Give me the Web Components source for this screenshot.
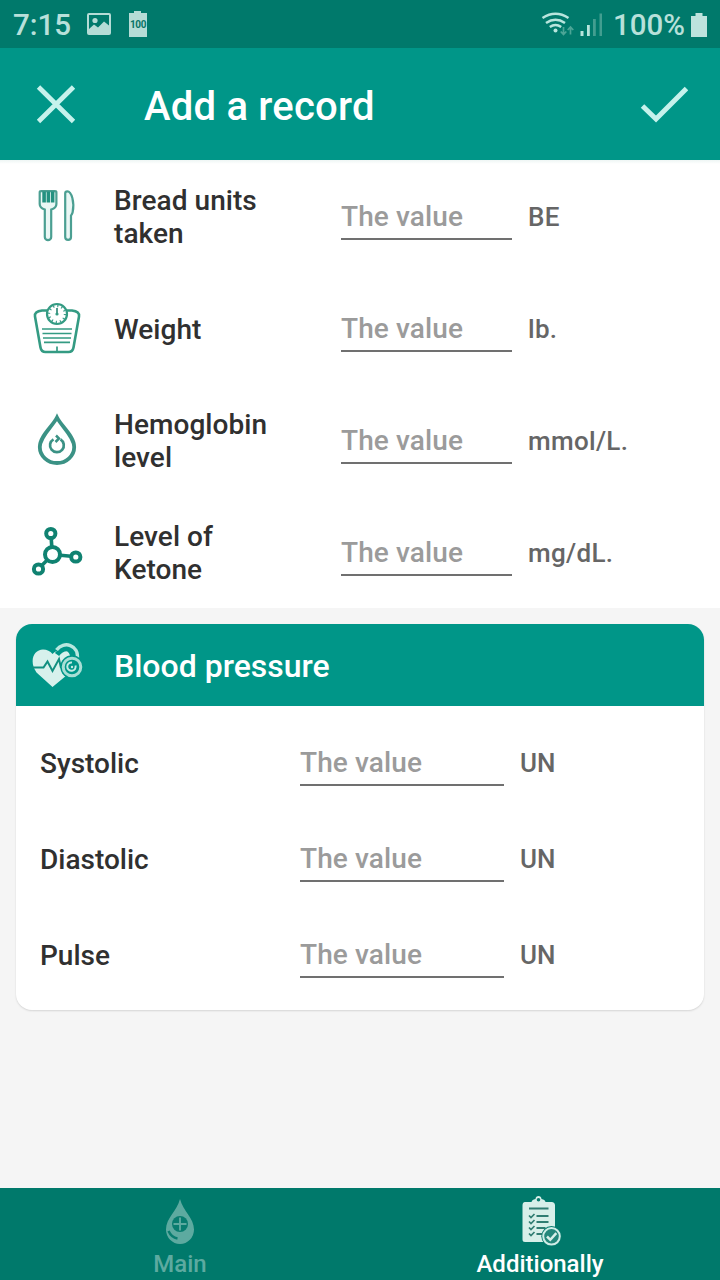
<!DOCTYPE html>
<html lang="en">
<head>
<meta charset="utf-8">
<title>Add a record</title>
<style>
body{margin:0;background:#f5f5f5;font-family:Roboto,"Liberation Sans",sans-serif}
</style>
</head>
<body>
<record-screen></record-screen>
<script>
const ICONS = {
  picture: ['86 12 26 26', '<path fill="#b5dcd6" fill-rule="evenodd" d="M89 13h20q2 0 2 2v18q0 2-2 2H89q-2 0-2-2V15q0-2 2-2zm0 2v14l5-4.500 4 3 6-6 5 4V15z"/><circle cx="95" cy="20.500" r="2.600" fill="#b5dcd6"/>'],
  battery: ['688 10 22 28', '<path fill="#bde3dd" d="M691 15h4.500v-3h7v3h4.500v21h-16z"/>'],
  wifi: ['540 8 36 30', '<g fill="none" stroke="#b8e5dd" stroke-width="2.500"><path d="M542.500 17q13-8.500 26 0M546 22q9.500-6.500 19 0M549.800 26q5.700-4 11.400 0"/></g><circle cx="555.500" cy="29.600" r="2" fill="#b8e5dd"/><path d="M563.500 26v7m-2.800-2.500 2.800 3 2.800-3M570.500 33.500v-7m-2.800 2.500 2.800-3 2.800 3" fill="none" stroke="#4ca596" stroke-width="1.700"/>'],
  signal: ['578 10 28 28', '<path fill="#b8e5dd" d="M580.500 31h3v5h-3zM587 25h2.800v11H587z"/><path fill="#429e90" d="M593 19h2.800v17H593zM599.500 13.500h2.500V36h-2.500z"/>'],
  close: ['32 80 48 48', '<path d="M38.500 87 73.500 121.500M73.500 87 38.500 121.500" fill="none" stroke="#c6f2ec" stroke-width="4.800"/>'],
  check: ['640 80 48 48', '<path d="m642.500 106 13.500 13 30.500-30.500" fill="none" stroke="#c6f2ec" stroke-width="5"/>'],
  cutlery: ['32 187 50 58', '<g fill="#eaf7f5" stroke="#4b9f92" stroke-width="2.200"><path d="M39.700 192.500q0-1.300 1.500-1.300h13.700q1.500 0 1.500 1.300V204q0 4-5.200 5.500v27.500a3.200 3.200 0 0 1-6.400 0V209.500q-5.100-1.500-5.100-5.500z"/><path d="M65.200 193.500q0-2.200 2.200-2.200c4 0 7.500 11 5.200 21.200q-1 2.500-1.600 3v21.500a2.900 2.900 0 0 1-5.800 0z"/></g><path fill="#239180" d="M42.300 191.500h3.600v11h-3.600zM46.600 191.500h3.600v11h-3.600zM51 191.500h3.400v11h-3.400z"/>'],
  scale: ['32 299 50 58', '<path d="M48 310.500H42q-8 1-7 6l5.500 31q.8 4.500 5 4.500h23q4.200 0 5-4.500l5.500-31q1-5-7-6h-6" fill="none" stroke="#349b83" stroke-width="2.600"/><circle cx="57" cy="314" r="10" fill="#fff" stroke="#349b83" stroke-width="2.200"/><circle cx="57" cy="314" r="8" fill="none" stroke="#3d9e8a" stroke-width="2.400" stroke-dasharray="1.200 2.989"/><path d="M57 308v5.500" stroke="#187866" stroke-width="1.500"/><circle cx="57" cy="314" r="1.600" fill="#349b83"/><path d="M42 329h30M42.500 333.500h29M43 338h28M44 342.300h26M57 346.500v4.500" stroke="#349b83" stroke-width="1.700"/>'],
  drop: ['32 410 50 60', '<g fill="none" stroke="#3b9285"><path d="M57 417.500c-4.500 9-17.200 18.500-17.200 29.500a17.200 16 0 0 0 34.400 0c0-11-12.700-20.500-17.200-29.500z" stroke-width="3.800"/><path d="M53.500 439.300a6.900 6.900 0 1 0 7 .1" stroke-width="2.700"/><path d="m56 435.500 3 3-3.500 3.500" stroke-width="2.500"/></g>'],
  molecule: ['30 525 54 54', '<g fill="none" stroke="#108271" stroke-width="4"><circle cx="52.500" cy="554.500" r="7.500"/><circle cx="50.800" cy="533.500" r="4.600"/><circle cx="75.800" cy="557" r="4.600"/><circle cx="38.500" cy="569" r="4.600"/><path stroke-width="3.600" d="M51.200 538.500l.6 8M60.500 555.300l10.500 1M47 560.200l-5 5"/></g>'],
  heart: ['30 639 54 50', '<path fill="#d7f1ec" d="M52.500 687 36.500 672.500C28.500 661 34 649.500 43 649.500q6 0 9.500 4.500 5-5.500 14-3.500 6 5 4 16L67 675z"/><path d="M57 654.500c6-9 21.500-7.500 20.500 5" fill="none" stroke="#009688" stroke-width="5"/><path d="M56.500 650c7-9.500 23-5.500 20.700 9.500" fill="none" stroke="#b8e7df" stroke-width="3.500"/><path d="M32 667.500h11.500l4-6 5 9.500 6.500-12 2 9" fill="none" stroke="#128f80" stroke-width="2"/><circle cx="72" cy="667" r="11.700" fill="#009688"/><circle cx="72" cy="667" r="8.800" fill="none" stroke="#a8ded5" stroke-width="3"/><path d="M75.500 665.500a4.200 4.200 0 1 1-3.500-3" fill="none" stroke="#c4ebe5" stroke-width="2"/><circle cx="72" cy="667" r="1.200" fill="#c4ebe5"/>'],
  main: ['160 1196 40 50', '<path fill="#5daaa0" d="M180 1199c-3 12-14 19-14 30.500a14 14.500 0 0 0 28 0c0-11.500-11-18.500-14-30.500z"/><circle cx="180" cy="1224" r="8" fill="#087c6f"/><path d="M173.500 1224h13M180 1217.500v13" stroke="#5daaa0" stroke-width="1.900"/><path d="M168.500 1231q3 6.500 9 7.500" fill="none" stroke="#087c6f" stroke-width="2.500"/>'],
  clipboard: ['517 1194 46 54', '<path fill="#d8efe9" d="M525 1202h6.500q.5-2.500 4-3c0-4 6-4 6 0q3.500.5 4 3h6q3.500 0 3.500 3.500V1242H525q-2.500 0-2.500-2.500v-34q0-3.500 2.500-3.500z"/><circle cx="538.500" cy="1199.800" r="1.800" fill="#087c6f"/><path d="M529 1208.500h19.500M536.500 1216h12M536.500 1222h12M536.500 1228h9M536.500 1234h6" stroke="#317d72" stroke-width="2"/><path d="m529 1215.500 2 2 3.500-3.500m-5.500 7.500 2 2 3.500-3.500m-5.500 7.500 2 2 3.500-3.500m-5.500 7.500 2 2 3.500-3.500" fill="none" stroke="#317d72" stroke-width="1.700"/><circle cx="551.500" cy="1236.300" r="10.200" fill="#087c6f"/><circle cx="551.500" cy="1236.300" r="8.300" fill="#24877b" stroke="#d0ede7" stroke-width="2"/><path d="m547 1236.500 3.300 3.300 6-6.600" fill="none" stroke="#d8efe9" stroke-width="2.500"/>']
};

function define(name, markup, setup) {
  customElements.define(name, class extends HTMLElement {
    connectedCallback() {
      if (this.shadowRoot) return;
      const template = document.createElement('template');
      template.innerHTML = markup;
      const root = this.attachShadow({mode: 'open'});
      const content = template.content.cloneNode(true);
      if (setup) setup(this, content);
      root.append(content);
    }
  });
}

define('app-icon', `<style>:host{display:block;flex:none}svg{display:block}</style><span></span>`, (el, root) => {
  const [box, art] = ICONS[el.getAttribute('name')];
  const [, , w, h] = box.split(' ');
  root.querySelector('span').innerHTML = `<svg width="${w}" height="${h}" viewBox="${box}" aria-hidden="true">${art}</svg>`;
});

define('charge-badge', `<style>
:host{display:flex;flex:none;width:18px;height:26px;box-sizing:border-box;padding-top:6px;justify-content:center;background:#b5dcd6;
clip-path:polygon(0 2px,5px 2px,5px 0,12px 0,12px 2px,18px 2px,18px 26px,0 26px);font-size:10px;line-height:16px;letter-spacing:-.4px;font-weight:700;color:#087566}
</style><slot></slot>`);

define('status-bar', `<style>
:host{display:flex;box-sizing:border-box;height:48px;background:#00796b;align-items:center;color:#b8e0da;font-size:29.500px;font-weight:500;line-height:48px;padding:0 10px 0 13px}
.time{width:73px;padding-top:2px}
charge-badge{margin-left:17px}
.gap{flex:1}
app-icon[name=picture]{margin-top:2px}
app-icon[name=battery]{margin-top:1px}
app-icon[name=signal]{margin:0 7px 0 2px}
.pct{width:75px;white-space:nowrap;padding-top:2px}
</style><span class="time">7:15</span><app-icon name="picture"></app-icon><charge-badge>100</charge-badge><span class="gap"></span>
<app-icon name="wifi"></app-icon><app-icon name="signal"></app-icon><span class="pct">100%</span><app-icon name="battery"></app-icon>`);

define('top-bar', `<style>
:host{display:flex;box-sizing:border-box;height:112px;padding:0 32px;align-items:center;background:#009688;color:#fff}
h1{flex:1;margin:5px 0 0 64px;font-size:40px;line-height:48px;font-weight:500;letter-spacing:.22px}
</style><app-icon name="close"></app-icon><h1><slot></slot></h1><app-icon name="check"></app-icon>`);

define('value-field', `<style>
:host{display:block;box-sizing:border-box;height:48px;padding-top:1px;border-bottom:2px solid #707070;color:#9b9b9b;font-size:28px;line-height:48px;font-weight:500;letter-spacing:.12px;white-space:nowrap}
</style><slot>The value</slot>`);

define('record-row', `<style>
:host{display:grid;grid-template-columns:50px 259px 171px 1fr;box-sizing:border-box;height:112px;padding:0 32px;align-items:center}
app-icon{justify-self:center}
.label{margin-left:32px;font-size:28px;line-height:33px;font-weight:500;letter-spacing:.06px;color:#303030;margin-top:2px}
.unit{padding-left:16px;font-size:26px;line-height:34px;color:#666;font-weight:500;letter-spacing:.3px;white-space:nowrap;margin-top:2px}
</style><span class="label"><slot></slot></span><value-field></value-field><span class="unit"></span>`, (el, root) => {
  const icon = document.createElement('app-icon');
  icon.setAttribute('name', el.getAttribute('icon'));
  root.querySelector('.label').before(icon);
  root.querySelector('.unit').textContent = el.getAttribute('unit');
});

define('pressure-row', `<style>
:host{display:grid;grid-template-columns:260px 204px 1fr;height:96px;padding:0 24px;align-items:center}
.label{font-size:28px;line-height:34px;font-weight:500;color:#303030;margin-top:3px}
.unit{padding-left:16px;font-size:26px;line-height:34px;color:#666;font-weight:500;margin-top:2px}
</style><span class="label"><slot></slot></span><value-field></value-field><span class="unit">UN</span>`);

define('pressure-card', `<style>
:host{display:block;box-sizing:border-box;height:386px;margin:16px;background:#fff;border-radius:16px;overflow:hidden;box-shadow:0 1px 2px #0002}
header{display:flex;height:82px;padding-left:14px;align-items:center;gap:30px;background:#009688;color:#fff}
app-icon{margin-top:-2px}
h2{margin:2px 0 0;font-size:32px;line-height:38px;font-weight:500}
main{padding:8px 0}
</style><header><app-icon name="heart"></app-icon><h2>Blood pressure</h2></header><main><slot></slot></main>`);

define('nav-tab', `<style>
:host{display:flex;flex:1;flex-direction:column;align-items:center;color:#5daaa0;font-size:24px;line-height:28px;font-weight:500}
:host([active]){color:#fff}
.art{height:54px;padding-top:6px;box-sizing:border-box;margin-bottom:8px}
:host(:not([active])) .art{padding-top:8px}
</style><div class="art"><slot name="icon"></slot></div><span><slot></slot></span>`);

define('bottom-nav', `<style>:host{display:flex;height:92px;background:#00796b}</style><slot></slot>`);

define('record-screen', `<style>
:host{display:flex;flex-direction:column;width:720px;height:1280px;overflow:hidden;background:#f5f5f5}
section{background:linear-gradient(#eef5f4,#fff 4px)}
bottom-nav{margin-top:auto}
</style>
<status-bar></status-bar>
<top-bar>Add a record</top-bar>
<section>
<record-row icon="cutlery" unit="BE">Bread units<br>taken</record-row>
<record-row icon="scale" unit="lb.">Weight</record-row>
<record-row icon="drop" unit="mmol/L.">Hemoglobin<br>level</record-row>
<record-row icon="molecule" unit="mg/dL.">Level of<br>Ketone</record-row>
</section>
<pressure-card><pressure-row>Systolic</pressure-row><pressure-row>Diastolic</pressure-row><pressure-row>Pulse</pressure-row></pressure-card>
<bottom-nav><nav-tab><app-icon slot="icon" name="main"></app-icon>Main</nav-tab><nav-tab active><app-icon slot="icon" name="clipboard"></app-icon>Additionally</nav-tab></bottom-nav>
`);
</script>
</body>
</html>
